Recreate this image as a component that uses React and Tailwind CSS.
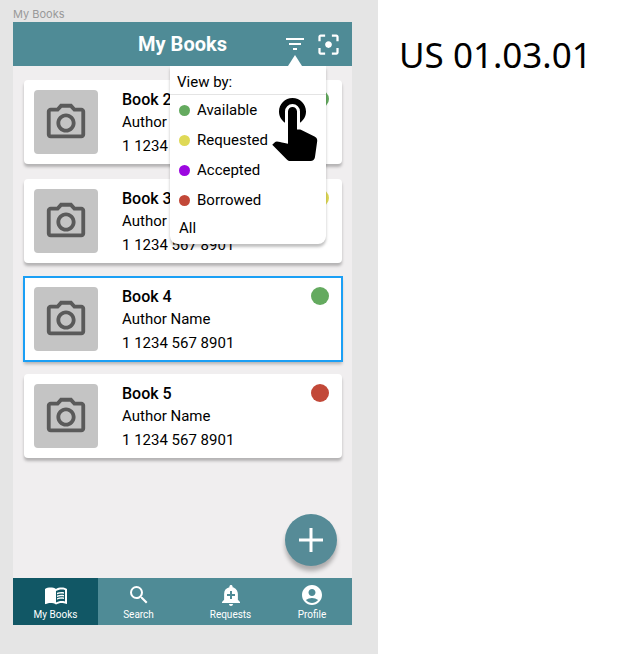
import {
  MdAccountCircle,
  MdAddAlert,
  MdFilterCenterFocus,
  MdFilterList,
  MdMenuBook,
  MdOutlinePhotoCamera,
  MdSearch,
  MdTouchApp,
} from "react-icons/md";

const books = [
  { title: "Book 2", dot: "bg-[#64aa5f]", frame: "rounded mb-[15px]" },
  { title: "Book 3", dot: "bg-[#dfd956]", frame: "rounded mb-[14px]" },
  { title: "Book 4", dot: "bg-[#64aa5f]", frame: "outline-2 -outline-offset-1 outline-[#1b9ff5] mb-[13px]" },
  { title: "Book 5", dot: "bg-[#c24838]", frame: "rounded" },
];

const statuses = [
  { name: "Available", dot: "bg-[#64aa5f]" },
  { name: "Requested", dot: "bg-[#dfd956]" },
  { name: "Accepted", dot: "bg-[#9c07e0]" },
  { name: "Borrowed", dot: "bg-[#c24838]" },
];

const tabs = [
  { name: "My Books", Icon: MdMenuBook, look: "bg-[#115765]" },
  { name: "Search", Icon: MdSearch, look: "" },
  { name: "Requests", Icon: MdAddAlert, look: "" },
  { name: "Profile", Icon: MdAccountCircle, look: "pr-[10px]" },
];

function BookCard({ title, dot, frame }) {
  return (
    <article className={`flex bg-white px-[10px] pb-[6px] pt-[10px] shadow-[0_3px_3px_rgba(0,0,0,0.25)] ${frame}`}>
      <div className="flex size-16 shrink-0 items-center justify-center rounded bg-[#c4c4c4] pt-[2px] text-[#5a5a5a]">
        <MdOutlinePhotoCamera size={46} />
      </div>
      <div className="ml-6 flex-1 whitespace-nowrap text-[15px] text-black">
        <h2 className="text-base font-medium leading-5">{title}</h2>
        <p className="leading-6">Author Name</p>
        <p className="leading-6">1 1234 567 8901</p>
      </div>
      <span className={`mr-[3px] size-[18px] rounded-full ${dot}`} />
    </article>
  );
}

function FilterMenu() {
  return (
    <div className="absolute right-[26px] top-full z-10 w-[156px] rounded-b-lg bg-white text-[15px] text-black shadow-[0_3px_3px_rgba(0,0,0,0.25)]">
      <svg className="absolute bottom-full right-6" width="14" height="11" viewBox="0 0 14 11" fill="#fff">
        <path d="M7 0 14 11H0z" />
      </svg>
      <p className="border-b border-[#e4e4e4] px-[7px] pt-1 leading-6">View by:</p>
      <div className="flex flex-col pb-[3px]">
        {statuses.map(({ name, dot }) => (
          <button key={name} type="button" className="flex h-[30px] items-center gap-[7px] pl-[9px]">
            <span className={`size-[11px] rounded-full ${dot}`} />
            {name}
          </button>
        ))}
        <button type="button" className="pl-[9px] text-left leading-[26px]">All</button>
      </div>
      <MdTouchApp size={72} className="absolute -right-1 top-[23px]" />
    </div>
  );
}

export default function App() {
  return (
    <div className="grid min-h-screen grid-cols-[378fr_250fr] bg-white font-['Roboto',sans-serif]">
      <div className="flex flex-col bg-[#e5e5e5] pb-[29px] pl-[13px] pr-[26px] pt-[6px]">
        <p className="h-4 font-['Inter',sans-serif] text-[11px] leading-4 text-[#999]">My Books</p>
        <div className="flex flex-1 flex-col bg-[#f0eeef]">
          <header className="relative grid h-11 grid-cols-[1fr_auto_1fr] items-center bg-[#4f8b96] text-white">
            <h1 className="col-start-2 text-xl font-bold">My Books</h1>
            <div className="flex items-center justify-end gap-2 pr-[10px]">
              <button type="button" aria-label="Filter">
                <MdFilterList size={24} />
              </button>
              <button type="button" aria-label="Scan">
                <MdFilterCenterFocus size={27} />
              </button>
            </div>
            <FilterMenu />
          </header>
          <main className="relative flex-1 pb-20 pl-[11px] pr-[10px] pt-[14px]">
            {books.map((book) => (
              <BookCard key={book.title} {...book} />
            ))}
            <button
              type="button"
              aria-label="Add book"
              className="absolute bottom-3 right-[15px] flex size-[52px] items-center justify-center rounded-full bg-[#568b97] shadow-[0_5px_4px_rgba(0,0,0,0.28)]"
            >
              <svg width="24" height="24" viewBox="0 0 24 24" stroke="#fff" strokeWidth="3">
                <path d="M12 0v24M0 12h24" />
              </svg>
            </button>
          </main>
          <nav className="grid h-[47px] grid-cols-[85fr_81fr_103fr_70fr] bg-[#4f8b96] text-[10px] text-white">
            {tabs.map(({ name, Icon, look }) => (
              <a key={name} href="#" className={`flex flex-col items-center justify-center gap-[2px] ${look}`}>
                <Icon size={24} />
                <span className="leading-3">{name}</span>
              </a>
            ))}
          </nav>
        </div>
      </div>
      <p className="whitespace-nowrap pl-[21px] pt-[31px] font-['Noto_Sans',sans-serif] text-[35px] leading-[48px] text-black">
        US 01.03.01
      </p>
    </div>
  );
}
